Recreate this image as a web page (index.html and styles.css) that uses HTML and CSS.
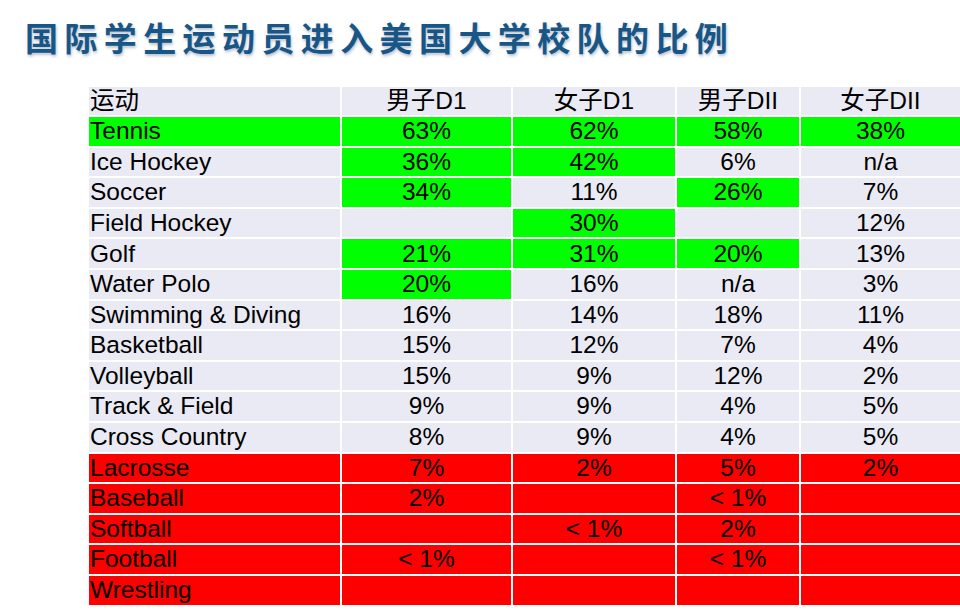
FILE: index.html
```html
<!DOCTYPE html>
<html lang="zh">
<head>
<meta charset="utf-8">
<title>国际学生运动员进入美国大学校队的比例</title>
<link rel="stylesheet" href="styles.css">
</head>
<body>
<h1 class="title">国际学生运动员进入美国大学校队的比例</h1>
<div class="grid">
  <div class="c lt name">运动</div><div class="c lt">男子D1</div><div class="c lt">女子D1</div><div class="c lt">男子DII</div><div class="c lt">女子DII</div>

  <div class="c gr name">Tennis</div><div class="c gr">63%</div><div class="c gr">62%</div><div class="c gr">58%</div><div class="c gr">38%</div>

  <div class="c lt name">Ice Hockey</div><div class="c gr">36%</div><div class="c gr">42%</div><div class="c lt">6%</div><div class="c lt">n/a</div>

  <div class="c lt name">Soccer</div><div class="c gr">34%</div><div class="c lt">11%</div><div class="c gr">26%</div><div class="c lt">7%</div>

  <div class="c lt name">Field Hockey</div><div class="c lt"></div><div class="c gr">30%</div><div class="c lt"></div><div class="c lt">12%</div>

  <div class="c lt name">Golf</div><div class="c gr">21%</div><div class="c gr">31%</div><div class="c gr">20%</div><div class="c lt">13%</div>

  <div class="c lt name">Water Polo</div><div class="c gr">20%</div><div class="c lt">16%</div><div class="c lt">n/a</div><div class="c lt">3%</div>

  <div class="c lt name">Swimming &amp; Diving</div><div class="c lt">16%</div><div class="c lt">14%</div><div class="c lt">18%</div><div class="c lt">11%</div>

  <div class="c lt name">Basketball</div><div class="c lt">15%</div><div class="c lt">12%</div><div class="c lt">7%</div><div class="c lt">4%</div>

  <div class="c lt name">Volleyball</div><div class="c lt">15%</div><div class="c lt">9%</div><div class="c lt">12%</div><div class="c lt">2%</div>

  <div class="c lt name">Track &amp; Field</div><div class="c lt">9%</div><div class="c lt">9%</div><div class="c lt">4%</div><div class="c lt">5%</div>

  <div class="c lt name">Cross Country</div><div class="c lt">8%</div><div class="c lt">9%</div><div class="c lt">4%</div><div class="c lt">5%</div>

  <div class="c rd name">Lacrosse</div><div class="c rd">7%</div><div class="c rd">2%</div><div class="c rd">5%</div><div class="c rd">2%</div>

  <div class="c rd name">Baseball</div><div class="c rd">2%</div><div class="c rd"></div><div class="c rd">&lt; 1%</div><div class="c rd"></div>

  <div class="c rd name">Softball</div><div class="c rd"></div><div class="c rd">&lt; 1%</div><div class="c rd">2%</div><div class="c rd"></div>

  <div class="c rd name">Football</div><div class="c rd">&lt; 1%</div><div class="c rd"></div><div class="c rd">&lt; 1%</div><div class="c rd"></div>

  <div class="c rd name">Wrestling</div><div class="c rd"></div><div class="c rd"></div><div class="c rd"></div><div class="c rd"></div>
</div>
</body>
</html>
```

FILE: styles.css
```css
html, body {
  margin: 0;
  padding: 0;
  background: #ffffff;
  width: 960px;
  height: 610px;
  overflow: hidden;
}

.title {
  margin: 0;
  padding: 17px 0 0 25px;
  height: 40px;
  line-height: 40px;
  font-family: "Noto Sans CJK SC", "Noto Sans", sans-serif;
  font-weight: 700;
  font-size: 33px;
  letter-spacing: 6.4px;
  color: #175687;
  text-shadow: 1px 2px 3px rgba(60, 80, 110, 0.35);
  white-space: nowrap;
}

.grid {
  margin: 29.5px 0 0 89px;
  display: grid;
  grid-template-columns: 251px 169px 162px 122px 159px;
  grid-auto-rows: 28.6px;
  gap: 2px;
  font-family: "Liberation Sans", "Noto Sans CJK SC", sans-serif;
  font-size: 24.5px;
  color: #000000;
}

.c {
  display: flex;
  align-items: center;
  justify-content: center;
  white-space: nowrap;
  line-height: 1;
  overflow: hidden;
}

.name {
  justify-content: flex-start;
  padding-left: 1px;
}

.lt { background: #e9eaf3; }
.gr { background: #00ff00; }
.rd { background: #ff0000; }
```
